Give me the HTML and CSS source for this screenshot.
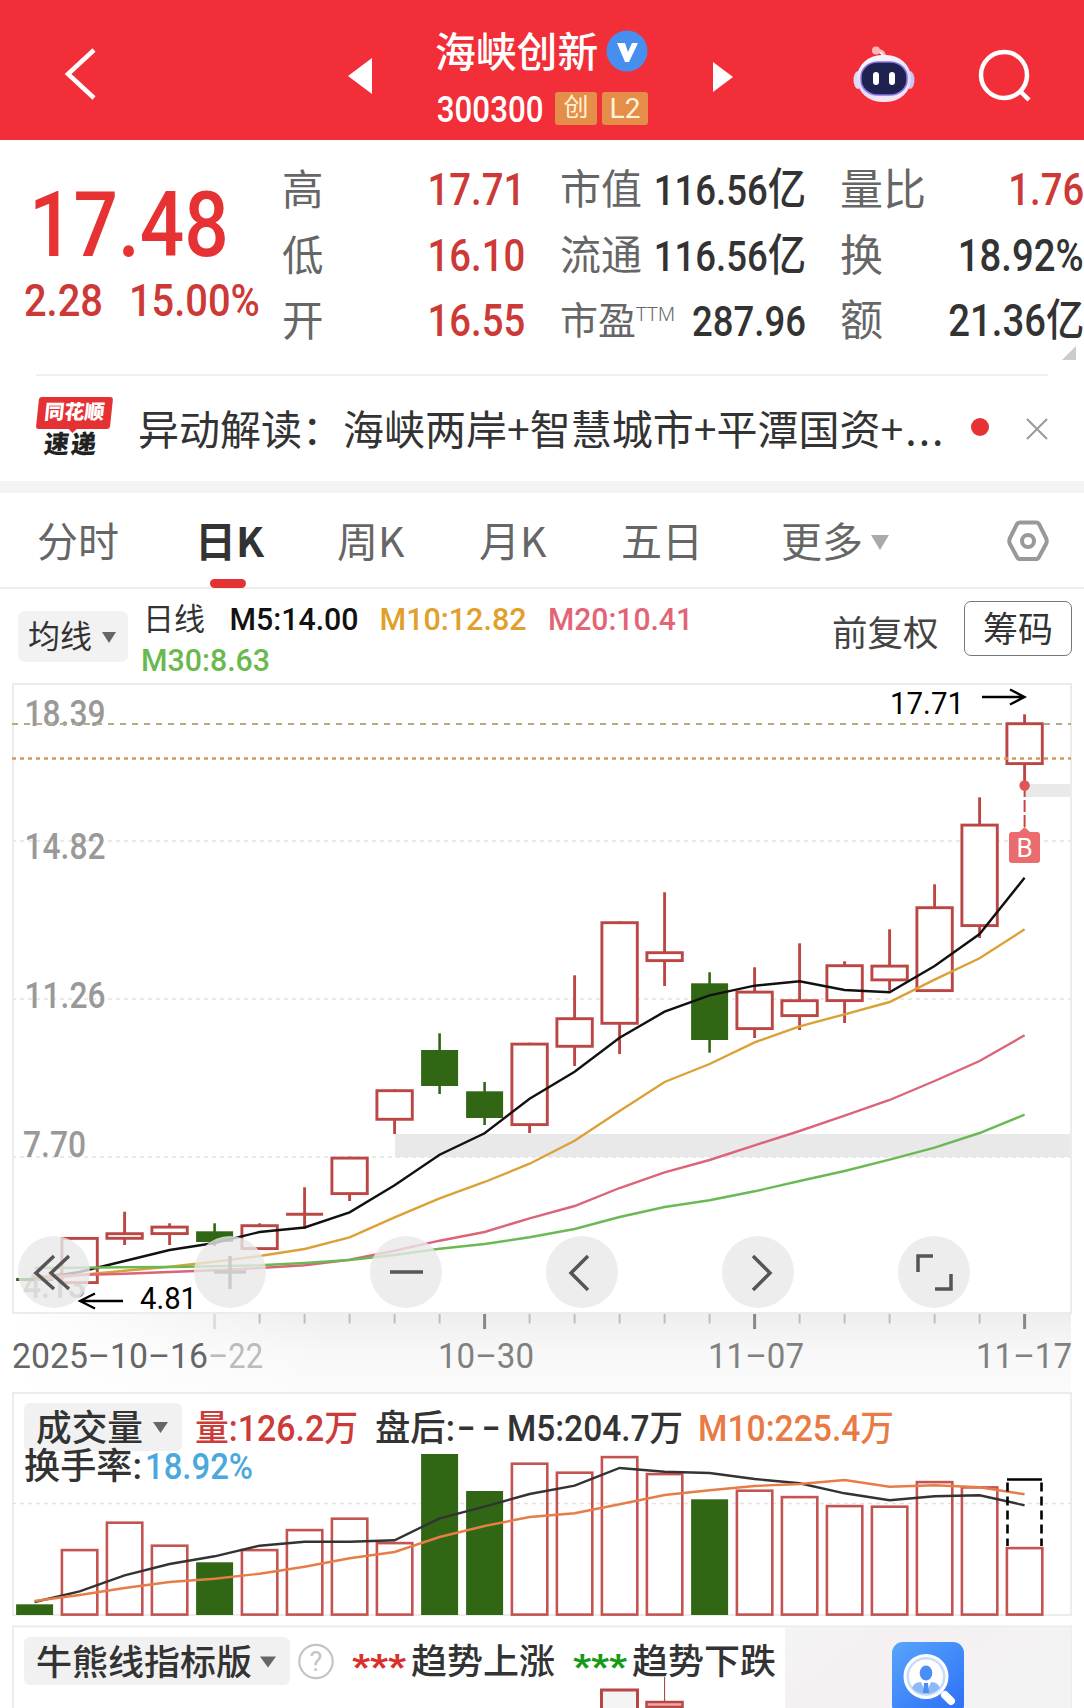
FILE: index.html
```
<!DOCTYPE html>
<html lang="zh-CN">
  <head>
    <meta charset="UTF-8" />
    <meta name="viewport" content="width=device-width, initial-scale=1.0" />
    <title>海峡创新 300300</title>
    <link rel="stylesheet" href="styles.css">
  </head>
  <body>
    <header class="topbar">
      <svg class="back" viewBox="0 0 40 60" width="40" height="60">
        <path d="M34 6 L8 30 L34 54" />
      </svg>
      <svg class="prev" viewBox="0 0 24 36" width="24" height="36"><path d="M24 0V36L0 18z" /></svg>
      <div class="stock">
        <div class="stock-name">海峡创新
          <svg viewBox="0 0 42 42" width="42" height="42">
            <circle cx="21" cy="21" r="20.5" fill="#468fee" />
            <path d="M11 13h8l3 9 4-9h6L23 32h-4z" fill="#fff" />
          </svg>
        </div>
        <div class="stock-code"><span class="num">300300</span><b class="tag">创</b><b class="tag tag-l2">L2</b></div>
      </div>
      <svg class="next" viewBox="0 0 20 30" width="20" height="30"><path d="M0 0V30L20 15z" /></svg>
      <svg class="robot" viewBox="0 0 62 60" width="62" height="60">
        <defs>
          <linearGradient id="shell" x1="0" y1="0" x2="0.3" y2="1">
            <stop offset="0" stop-color="#fff" />
            <stop offset="0.7" stop-color="#dcd8fa" />
            <stop offset="1" stop-color="#f4e6f6" />
          </linearGradient>
        </defs>
        <path d="M23 6 Q31 4 32 12" fill="none" stroke="#fbb" stroke-width="2.5" />
        <circle cx="23" cy="5.500" r="4" fill="#fdb6c0" />
        <ellipse cx="5" cy="35" rx="4.500" ry="9" fill="#dcdcf8" />
        <ellipse cx="57" cy="35" rx="4.500" ry="9" fill="#c9c5f2" />
        <rect x="4" y="10" width="54" height="47" rx="25" ry="23" fill="url(#shell)" />
        <rect x="8" y="17" width="46" height="33" rx="17" ry="15" fill="#1f2150" stroke="#8a74e0" stroke-width="1.500" />
        <rect x="20" y="27" width="6" height="13" rx="3" fill="#fff" />
        <rect x="36" y="27" width="6" height="13" rx="3" fill="#fff" />
      </svg>
      <svg class="search" viewBox="0 0 54 54" width="54" height="54">
        <circle cx="26" cy="26" r="23" />
        <path d="M42 42 L51 51" />
      </svg>
    </header>

    <section class="quote">
      <div class="price">
        <div class="last"><span class="num">17.48</span></div>
        <div class="change"><span class="num">2.28</span><span class="num">15.00%</span></div>
      </div>
      <dl class="col col-a">
        <dt>高</dt><dd class="red">17.71</dd>
        <dt>低</dt><dd class="red">16.10</dd>
        <dt>开</dt><dd class="red">16.55</dd>
      </dl>
      <dl class="col col-b">
        <dt>市值</dt><dd>116.56<i>亿</i></dd>
        <dt>流通</dt><dd>116.56<i>亿</i></dd>
        <dt class="pe">市盈<sup>TTM</sup></dt><dd>287.96</dd>
      </dl>
      <dl class="col col-c">
        <dt>量比</dt><dd class="red">1.76</dd>
        <dt>换</dt><dd>18.92%</dd>
        <dt>额</dt><dd>21.36<i>亿</i></dd>
      </dl>
      <span class="corner"></span>
    </section>

    <section class="news">
      <div class="news-logo"><b>同花顺</b><i>速递</i></div>
      <p>异动解读：海峡两岸+智慧城市+平潭国资+<span class="dots">...</span></p>
      <span class="unread"></span>
      <svg class="close" viewBox="0 0 22 22" width="22" height="22"><path d="M1 1 L21 21 M21 1 L1 21" /></svg>
    </section>

    <nav class="tabs">
      <a>分时</a>
      <a class="active">日K</a>
      <a>周K</a>
      <a>月K</a>
      <a>五日</a>
      <a class="more">更多</a>
      <svg viewBox="0 0 42 42" width="42" height="42">
        <path d="M13 2.500h16q2 0 3 1.500l7 14q1.500 3 0 6l-7 13q-1 2-3 2H13q-2 0-3-2L3 24q-1.500-3 0-6L10 4q1-1.500 3-1.500z" />
        <circle cx="21" cy="21" r="6" />
      </svg>
    </nav>

    <section class="legend">
      <span class="select">均线</span>
      <svg class="ma-text" viewBox="140 590 560 94" width="560" height="94">
        <text class="cjk" x="143" y="631" font-size="31" fill="#333">日线</text>
        <text x="229.500" y="631" textLength="129" fill="#111">M5:14.00</text>
        <text x="379.500" y="631" textLength="147" fill="#dfa02c">M10:12.82</text>
        <text x="548" y="631" textLength="145" fill="#e26575">M20:10.41</text>
        <text x="141" y="672" textLength="129" fill="#69b94e">M30:8.63</text>
      </svg>
      <span class="adjust">前复权</span>
      <span class="chips">筹码</span>
    </section>

    <section class="chart">
      <svg id="kline" viewBox="0 683 1084 631" width="1084" height="631">
        <rect x="395" y="1134" width="676" height="23" fill="#e9e9e9" />
        <rect x="1024" y="784" width="47" height="13" fill="#e9e9e9" />
        <g class="grid">
          <path d="M12 841H1071M12 999H1071M12 1157H1071" />
        </g>
        <path class="frame" d="M13 684H1071V1313H13z" />
        <g class="scale">
          <text x="24.500" y="725.500" textLength="81">18.39</text>
          <text x="24.500" y="858.500" textLength="81">14.82</text>
          <text x="24.500" y="1007.500" textLength="81">11.26</text>
          <text x="23" y="1156.500" textLength="63">7.70</text>
          <text x="23" y="1297.500" textLength="63">4.13</text>
        </g>
        <path d="M12 724H1071" stroke="#b9ac7c" stroke-width="2" stroke-dasharray="6 6" />
        <g id="candles"></g>
        <path d="M12 758.500H1071" stroke="#cf9a5c" stroke-width="2.500" stroke-dasharray="4 4" />
        <g id="averages"></g>
        <g class="mark">
          <text x="890" y="714" textLength="74">17.71</text>
          <path d="M982 697H1024M1010 689.500L1024.500 697L1010 704.500" />
          <text x="140" y="1308.500" textLength="57">4.81</text>
          <path d="M80 1301H123M95 1293.500L80 1301L95 1308.500" />
        </g>
        <path d="M1024.600 785V828" stroke="#c64542" stroke-width="2" stroke-dasharray="12 3" />
        <circle cx="1024.600" cy="785.500" r="5.200" fill="#e0555a" />
        <path d="M1018 833L1024.600 827L1031 833z" fill="#ea6c6e" />
        <rect x="1009" y="832" width="31" height="31" rx="3" fill="#ea6c6e" />
        <text class="buy" x="1024.600" y="856.500" text-anchor="middle">B</text>
      </svg>
      <div class="tools">
        <span><svg viewBox="0 0 72 72"><path d="M36 20L18 37L36 53M51 20L33 37L51 53" /></svg></span>
        <span class="off"><svg viewBox="0 0 72 72"><path d="M20 36H52M36 20V53" /></svg></span>
        <span><svg viewBox="0 0 72 72"><path d="M20 36H53" stroke-width="4" /></svg></span>
        <span><svg viewBox="0 0 72 72"><path d="M42 20L25 37L42 54" /></svg></span>
        <span><svg viewBox="0 0 72 72"><path d="M31 20L48 37L31 54" /></svg></span>
        <span><svg viewBox="0 0 72 72"><path d="M35 20H20V36M53 38V53H37" stroke-width="4" /></svg></span>
      </div>
    </section>

    <section class="axis">
      <svg id="axis" viewBox="12 1314 1060 78" width="1060" height="78">
        <g id="ticks"></g>
        <text x="208" y="1367.500" textLength="55" fill="#bbb">–22</text>
        <text x="12" y="1367.500" textLength="196" fill="#666">2025–10–16</text>
        <text x="438" y="1367.500" textLength="96">10–30</text>
        <text x="708" y="1367.500" textLength="96">11–07</text>
        <text x="976" y="1367.500" textLength="96">11–17</text>
      </svg>
    </section>

    <section class="volume">
      <svg viewBox="0 1392 1084 228" width="1084" height="228">
        <path class="frame" d="M13 1393H1071V1615H13z" />
        <g class="grid"><path d="M12 1503.500H1071" /></g>
        <rect x="24" y="1403" width="158" height="48" rx="6" fill="#f1f1f1" />
        <text x="36" y="1441" textLength="107">成交量</text>
        <path d="M153 1422H168L160.500 1433z" fill="#666" />
        <g id="bars"></g>
        <text x="195" y="1441" textLength="163" fill="#cc3b38">量:126.2万</text>
        <text x="375" y="1441" textLength="80">盘后:</text>
        <text x="457" y="1441" textLength="43">– –</text>
        <text x="507" y="1441" textLength="176">M5:204.7万</text>
        <text x="698" y="1441" textLength="196" fill="#e87a46">M10:225.4万</text>
        <text x="24" y="1479" textLength="118">换手率:</text>
        <text x="145" y="1479" textLength="108" fill="#4aa8dc">18.92%</text>
      </svg>
    </section>

    <section class="trend">
      <svg viewBox="0 1620 1084 88" width="1084" height="88">
        <defs>
          <linearGradient id="promo" x1="0" y1="0" x2="1" y2="0.400">
            <stop offset="0" stop-color="#f4f4f4" />
            <stop offset="0.400" stop-color="#f5f0f1" />
            <stop offset="1" stop-color="#f3f3f4" />
          </linearGradient>
          <linearGradient id="appicon" x1="0" y1="0" x2="0.800" y2="1">
            <stop offset="0" stop-color="#58a4fb" />
            <stop offset="1" stop-color="#2f72f8" />
          </linearGradient>
        </defs>
        <path class="frame" d="M13 1720V1626.500H1071V1720" />
        <rect x="785" y="1627" width="286" height="90" fill="url(#promo)" />
        <rect x="24" y="1637" width="266" height="48" rx="6" fill="#f1f1f1" />
        <text x="36" y="1674.500" textLength="216">牛熊线指标版</text>
        <path d="M260 1656.500H276L268 1667.500z" fill="#666" />
        <circle cx="316" cy="1661.500" r="16.700" fill="none" stroke="#c4c4c4" stroke-width="2.200" />
        <text x="316" y="1671" text-anchor="middle" font-size="27" class="help">?</text>
        <text x="352" y="1678" textLength="54" class="star" fill="#d9302c">***</text>
        <text x="411" y="1674" textLength="144">趋势上涨</text>
        <text x="573" y="1678" textLength="54" class="star" fill="#159a15">***</text>
        <text x="632" y="1674" textLength="144">趋势下跌</text>
        <rect x="601.500" y="1690" width="36" height="30" fill="#f4f4f4" stroke="#b84644" stroke-width="3" />
        <path d="M664.600 1677V1720" stroke="#9e3a3a" />
        <rect x="646.500" y="1702" width="36" height="5" fill="#efa8a8" stroke="#b84644" stroke-width="2.500" />
        <rect x="892" y="1642" width="72" height="74" rx="11" fill="url(#appicon)" />
        <circle cx="926" cy="1676.500" r="21" fill="#c8dcfb" stroke="#fff" stroke-width="3" />
        <circle cx="926" cy="1676.500" r="17" fill="#fff" />
        <ellipse cx="926" cy="1673" rx="6.300" ry="7.500" fill="#4a8ff5" />
        <path d="M912 1688Q914 1682 921 1682L926 1694L931 1682Q938 1682 940 1688Q934 1694 926 1694Q917 1694 912 1688z" fill="#8db9f8" />
        <path d="M924 1683h4l1 10h-6z" fill="#4a8ff5" />
        <path d="M945 1695L951 1701" stroke="#fff" stroke-width="8" stroke-linecap="round" />
      </svg>
    </section>

    <script>
      const first = 34.6;
      const step = 45;
      const x = (i) => first + step * i;

      // [high, top of body, bottom of body, low, falling]
      const candles = [
        [1278, 1278, 1281, 1281, 1],
        [1237, 1237, 1284, 1284],
        [1211.7, 1232.3, 1239.7, 1245],
        [1223.3, 1225.7, 1235, 1245],
        [1223.3, 1231.3, 1242, 1246, 1],
        [1223.3, 1224.3, 1250, 1250],
        [1187.3, 1213, 1215.6, 1229],
        [1156.7, 1156.7, 1195, 1201],
        [1089.3, 1089.3, 1120.7, 1134],
        [1033.3, 1050, 1086, 1094, 1],
        [1082, 1091.3, 1118, 1125, 1],
        [1042.7, 1042.7, 1126, 1133],
        [975.3, 1017.3, 1047.7, 1066],
        [921.3, 921.3, 1024.7, 1054],
        [892.3, 951.3, 962, 986],
        [972.3, 983.3, 1040, 1052.7, 1],
        [967.3, 990.7, 1030, 1038],
        [943.3, 999.3, 1017, 1030],
        [961.3, 964.3, 1002, 1023],
        [929.3, 964.7, 981.3, 990.7],
        [884.3, 906.3, 992, 992],
        [797.3, 823.7, 927, 938],
        [714.3, 722.3, 765, 785],
      ];

      const averages = {
        "#111": [1279, 1272, 1261, 1250, 1243, 1232, 1227.5, 1212.3, 1185.3, 1154.7, 1133.3, 1098.7, 1071.7, 1037.7, 1011.7, 995.3, 985.7, 981.3, 990, 992.3, 966, 934, 877.7],
        "#dba136": [1280, 1275, 1270.7, 1266.7, 1261.7, 1256, 1249, 1237.3, 1217.3, 1198.3, 1182, 1163.7, 1140.7, 1111, 1082, 1064, 1042.3, 1026.3, 1014.3, 1002, 979.7, 958.3, 929.3],
        "#dc6478": [1277, 1275, 1273.7, 1272, 1270.3, 1268, 1265.3, 1259.7, 1250.7, 1240.7, 1232, 1218.3, 1206, 1188, 1172.3, 1160, 1145.3, 1131, 1115.7, 1100, 1081, 1061, 1035.3],
        "#6bb955": [1268, 1267.7, 1267.3, 1267, 1266.3, 1265.3, 1263, 1260, 1255, 1248.7, 1244, 1237.3, 1229, 1217, 1207, 1200.3, 1191.3, 1181, 1171, 1159.7, 1147.7, 1133, 1114.7],
      };

      const volumes = [1604.3, 1548.7, 1521.3, 1544.3, 1562.3, 1548.7, 1528.7, 1517.3, 1541.7, 1454, 1491, 1462.3, 1471.3, 1455.7, 1472.7, 1499.3, 1489.3, 1495.7, 1504.7, 1505.3, 1480.7, 1486, 1546.7];
      const volumeAverages = {
        "#333": [1602, 1591.3, 1575.3, 1564, 1556.3, 1545.7, 1541.7, 1541.7, 1540.3, 1518.3, 1506.7, 1494, 1485.7, 1468, 1471.7, 1473, 1479, 1483.3, 1493.3, 1500.3, 1496.3, 1495.3, 1505.3],
        "#e67d48": [1601, 1595, 1588, 1582, 1578.7, 1573.7, 1566.7, 1558.3, 1552, 1537, 1526, 1517, 1513.3, 1504.3, 1495, 1490.3, 1486, 1484, 1480, 1486.7, 1485.3, 1487.3, 1494.3],
      };

      function box(i, top, bottom, falling) {
        if (falling) {
          return `<rect class="down" x="${x(i) - 18.5}" y="${top}" width="37" height="${bottom - top}" />`;
        }
        if (bottom - top < 4) {
          return `<path class="up" d="M${x(i) - 18.5} ${(top + bottom) / 2}h37" />`;
        }
        return `<rect class="up" x="${x(i) - 17.7}" y="${top + 1.4}" width="35.4" height="${bottom - top - 2.8}" />`;
      }

      function lines(set) {
        return Object.entries(set)
          .map(([color, ys]) => {
            const points = ys.map((y, i) => `${x(i)},${y}`).join(" ");
            return `<polyline class="line" points="${points}" stroke="${color}" />`;
          })
          .join("");
      }

      document.getElementById("candles").innerHTML = candles
        .map(([high, top, bottom, low, falling], i) => {
          const wick = `<path class="${falling ? "down" : "up"}" d="M${x(i)} ${high}V${low}" />`;
          return wick + box(i, top, bottom, falling);
        })
        .join("");
      document.getElementById("averages").innerHTML = lines(averages);

      document.getElementById("bars").innerHTML =
        volumes.map((top, i) => box(i, top, falls(i) ? 1615 : 1616, falls(i))).join("") +
        lines(volumeAverages) +
        `<path class="forecast" d="M1007 1479.5H1042" />
         <path class="forecast" stroke-dasharray="9 5" d="M1007.500 1482.500V1546M1041.500 1482.500V1546" />`;

      function falls(i) {
        return candles[i][4];
      }

      let ticks = "";
      for (let i = 4; i < 23; i++) {
        const big = i % 6 === 4;
        const color = i === 4 ? "#ddd" : big ? "#888" : "#bdbdbd";
        ticks += `<path d="M${x(i)} 1314V${big ? 1329 : 1323.5}" stroke="${color}" stroke-width="${big ? 3 : 2}" />`;
      }
      document.getElementById("ticks").innerHTML = ticks;

      // narrow the glyphs too, not only the gaps
      document.querySelectorAll("text[textLength]").forEach((t) => {
        t.setAttribute("lengthAdjust", "spacingAndGlyphs");
      });
    </script>
  </body>
</html>
```
FILE: styles.css
```
* {
  box-sizing: border-box;
}
body {
  margin: 0;
  width: 1084px;
  height: 1708px;
  overflow: hidden;
  background: #fff;
  color: #333;
  font-family: Roboto, "Noto Sans CJK SC", sans-serif;
}
svg {
  display: block;
  flex: none;
}
svg text {
  font-family: Roboto, "Noto Sans CJK SC", sans-serif;
  font-weight: 500;
}
.num {
  display: inline-block;
  transform: scaleX(0.87);
  transform-origin: left;
  font-weight: 500;
  white-space: nowrap;
}

/* top bar */
.topbar {
  display: flex;
  height: 140px;
  padding-left: 60px;
  background: #f22f38;
  color: #fff;
}
.topbar path {
  fill: #fff;
}
.back {
  margin-top: 44px;
}
.topbar .back path,
.topbar .search path,
.search circle {
  fill: none;
  stroke: #fff;
  stroke-width: 4.5;
}
.prev {
  margin: 58px 0 0 248px;
}
.stock {
  width: 278px;
  margin-left: 63px;
}
.stock-name {
  display: flex;
  height: 60px;
  margin-top: 19px;
  align-items: center;
  gap: 8px;
  font-size: 40.8px;
  font-weight: 500;
}
.stock-name svg {
  margin-top: 3px;
}
.stock-code {
  display: flex;
  height: 42px;
  margin-top: 8px;
  align-items: center;
  font-size: 36px;
}
.stock-code .num {
  width: 120px;
  padding: 3px 0 0 2px;
}
.tag {
  width: 42px;
  height: 33px;
  border-radius: 3px;
  background: #e58e4a;
  color: #fff3d5;
  font-size: 25px;
  font-weight: 400;
  line-height: 31px;
  text-align: center;
}
.tag-l2 {
  width: 46px;
  margin-left: 5px;
  font-size: 28px;
  line-height: 33px;
}
.next {
  margin-top: 62px;
}
.robot {
  margin: 45px 0 0 120px;
}
.search {
  margin: 49px 0 0 63px;
}

/* quote */
.quote {
  position: relative;
  display: flex;
  height: 234px;
  padding-top: 16px;
}
.price {
  width: 282px;
  padding-top: 2px;
  color: #e63232;
}
.last {
  height: 106px;
  padding-left: 29px;
  font-size: 90px;
  line-height: 136px;
}
.change {
  display: flex;
  padding-left: 24px;
  color: #cc3936;
  font-size: 43.5px;
  line-height: 76px;
}
.change .num {
  width: 105px;
  transform: scaleX(0.915);
}
.col {
  display: grid;
  grid-template-columns: auto minmax(0, 1fr);
  grid-auto-rows: 65.5px;
  margin: 0;
  line-height: 65px;
  white-space: nowrap;
}
.col dt {
  padding-top: 2px;
  color: #666;
  font-size: 41.5px;
}
.col dd {
  justify-self: end;
  margin: 0;
  padding-top: 2px;
  font-size: 44px;
  font-weight: 500;
  transform: scaleX(0.87);
  transform-origin: right;
}
.col .red {
  color: #cc3936;
}
.col i {
  font-size: 44px;
  font-style: normal;
  line-height: 1;
}
.col-a {
  width: 243px;
}
.col-b {
  width: 246px;
  margin-left: 35px;
}
.col-b dt {
  font-size: 41px;
}
.col-b dd {
  font-size: 42px;
}
.col-b .pe {
  font-size: 38px;
}
.pe sup {
  font-family: "Noto Sans", sans-serif;
  font-size: 20px;
  font-weight: 300;
  line-height: 1;
  vertical-align: 13px;
}
.col-c {
  width: 244px;
  margin-left: 34px;
}
.col-c dt {
  font-size: 43px;
}
.corner {
  position: absolute;
  right: 8px;
  bottom: 14px;
  border: 7.5px solid #ccc;
  border-top-color: transparent;
  border-left-color: transparent;
}

/* news */
.news {
  display: flex;
  height: 107px;
  margin: 0 36px;
  border-top: 2px solid #f0f0f0;
  align-items: center;
}
.news-logo {
  width: 74px;
  margin: -3px 28px 0 0;
  text-align: center;
  transform: skewX(-6deg);
  line-height: 1;
}
.news-logo b {
  position: relative;
  display: block;
  height: 32px;
  border-radius: 3px;
  background: #e43234;
  color: #fff;
  font-size: 20px;
  font-weight: 900;
  line-height: 31px;
}
.news-logo b::after {
  content: "";
  position: absolute;
  left: 32px;
  top: 31px;
  border: 5px solid transparent;
  border-top-color: #e43234;
  border-bottom: 0;
}
.news-logo i {
  display: block;
  padding-top: 3px;
  color: #222;
  font-size: 25px;
  font-style: normal;
  font-weight: 900;
  letter-spacing: 2px;
}
.news p {
  width: 814px;
  margin: -4px 0 0;
  font-family: "Noto Sans CJK SC", sans-serif;
  font-size: 41px;
  line-height: 60px;
  white-space: nowrap;
}
.dots {
  margin-left: 2px;
  letter-spacing: 2px;
}
.unread {
  width: 18px;
  height: 18px;
  margin: -3px 0 0 19px;
  border-radius: 50%;
  background: #e63232;
}
.close {
  margin-left: 37px;
  fill: none;
  stroke: #999;
  stroke-width: 2;
}

/* tabs */
.tabs {
  display: flex;
  height: 108px;
  border-top: 12px solid #f4f4f4;
  border-bottom: 2px solid #ededed;
  color: #666;
  font-family: "Noto Sans CJK SC", sans-serif;
  font-size: 41px;
  line-height: 92px;
  padding-left: 37px;
}
.tabs a {
  width: 142px;
}
.tabs a:first-child {
  width: 158px;
}
.tabs .active {
  position: relative;
  color: #333;
  font-weight: 700;
}
.active::after {
  content: "";
  position: absolute;
  left: 15px;
  bottom: -1px;
  width: 36px;
  height: 9px;
  border-radius: 5px;
  background: #e43234;
}
.tabs a:nth-child(5) {
  width: 160px;
}
.tabs .more {
  width: 226px;
}
.more::after,
.select::after {
  content: "";
  display: inline-block;
  border: 9px solid transparent;
  border-top: 15px solid #aaa;
  border-bottom: 0;
  margin-left: 8px;
  vertical-align: 7px;
}
.tabs svg {
  margin-top: 27px;
  fill: none;
  stroke: #999;
  stroke-width: 4;
}

/* moving average legend */
.legend {
  display: flex;
  height: 94px;
  padding-left: 18px;
}
.select {
  width: 110px;
  height: 51px;
  margin: 22px 12px 0 0;
  padding-left: 10px;
  border-radius: 7px;
  background: #f2f2f2;
  font-size: 32px;
  line-height: 52px;
  white-space: nowrap;
}
.select::after {
  border-width: 11px 7.5px 0;
  border-top-color: #666;
  margin-left: 10px;
  vertical-align: 5px;
}
.ma-text {
  font-size: 32px;
}
.ma-text .cjk {
  font-weight: 400;
}
.adjust {
  width: 131px;
  margin-left: 132px;
  color: #444;
  font-size: 35.5px;
  line-height: 91px;
}
.chips {
  width: 108px;
  height: 55px;
  margin: 12px 0 0 1px;
  border: 1.5px solid #777;
  border-radius: 7px;
  font-size: 35px;
  line-height: 58px;
  text-align: center;
}

/* charts */
.frame {
  fill: none;
  stroke: #ececec;
  stroke-width: 2;
}
.grid path {
  fill: none;
  stroke: #e2e2e2;
  stroke-width: 1.5;
  stroke-dasharray: 4 4;
}
.scale {
  font-size: 36px;
  fill: #999;
}
.mark {
  font-size: 31px;
}
.mark text {
  font-weight: 400;
}
.mark path {
  fill: none;
  stroke: #000;
  stroke-width: 2.3;
}
.chart .buy {
  fill: #fff;
  font-size: 26px;
  font-weight: 400;
}
.up {
  fill: #fff;
  stroke: #bb4745;
  stroke-width: 2.9;
}
.down {
  fill: #316714;
}
path.down {
  stroke: #316714;
  stroke-width: 2.6;
}
.line {
  fill: none;
  stroke-width: 2.4;
}
.chart {
  position: relative;
  height: 631px;
}
.tools {
  position: absolute;
  left: 18px;
  right: 114px;
  top: 553px;
  display: flex;
  justify-content: space-between;
}
.tools span {
  width: 72px;
  height: 72px;
  border-radius: 50%;
  background: rgba(232, 232, 232, 0.8);
}
.tools path {
  fill: none;
  stroke: #555;
  stroke-width: 3.5;
}
.tools .off path {
  stroke: #ccc;
}
.axis {
  height: 78px;
  margin: 0 13px 0 12px;
  background: linear-gradient(90deg, #fff, rgba(255, 255, 255, 0) 30%), linear-gradient(#eee, #f8f8f8 50%, #fbfbfb);
}
.axis svg {
  font-size: 35px;
  fill: #808080;
}
.axis text {
  font-weight: 400;
}
.volume svg {
  font-size: 36px;
  fill: #333;
}
.volume .up {
  fill: none;
  stroke: #c45452;
  stroke-width: 2.6;
}
.forecast {
  fill: none;
  stroke: #000;
  stroke-width: 2.6;
}
.trend svg {
  font-size: 35.6px;
  fill: #333;
}
.trend .help {
  fill: #c4c4c4;
  font-weight: 400;
}
.trend .star {
  font-size: 34px;
  font-weight: 900;
}
```
